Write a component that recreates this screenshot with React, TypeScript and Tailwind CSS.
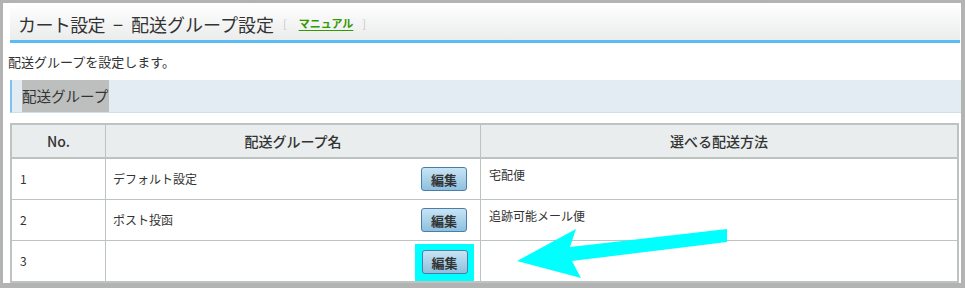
import React from "react";

const font = { fontFamily: '"Noto Sans CJK JP", "Noto Sans", sans-serif' };

function EditButton() {
  return (
    <button className="w-[46px] h-[24px] rounded-[3px] border border-[#4a7ea8] bg-gradient-to-b from-[#c8e4f5] to-[#8ec0de] text-[13px] font-bold text-[#333] leading-none flex items-center justify-center">
      編集
    </button>
  );
}

const rows = [
  { no: "1", name: "デフォルト設定", method: "宅配便" },
  { no: "2", name: "ポスト投函", method: "追跡可能メール便" },
  { no: "3", name: "", method: "", highlight: true },
];

export default function App() {
  return (
    <div className="relative w-[965px] h-[288px] bg-[#b3b3b3] pt-[3px] pl-[3px] pr-[4px] pb-[5px]" style={font}>
      <div className="w-full h-full bg-white overflow-hidden flex flex-col text-[#333]">
        {/* Title header */}
        <div className="ml-[7px] mr-[1px] h-[40px] shrink-0 border-b-[3px] border-[#5bbcf4] bg-gradient-to-b from-white to-[#ebecec] flex items-center pl-[8px] pt-[4px]">
          <h1 className="flex items-center text-[18px] leading-none text-[#333] font-normal">
            <span className="tracking-[-0.6px]">カート設定</span>
            <span className="ml-[8px] mr-[8px]">−</span>
            <span>配送グループ設定</span>
          </h1>
          <span className="ml-[9px] text-[11px] text-[#c8c8c8]">[</span>
          <span className="ml-[12px] text-[11px] font-bold text-[#339900] underline underline-offset-2">マニュアル</span>
          <span className="ml-[9px] text-[11px] text-[#c8c8c8]">]</span>
        </div>
        {/* Description */}
        <div className="h-[37px] shrink-0 flex items-center pl-[5px] text-[13px] leading-none">
          配送グループを設定します。
        </div>
        {/* Section bar */}
        <div className="ml-[7px] h-[33px] shrink-0 bg-[#e2ecf2] border-l-2 border-[#7cc4f0] border-b border-b-[#cfe0e2] flex">
          <div className="ml-[10px] h-full bg-[#bcbfbd] flex items-center text-[14.5px] leading-none pr-[1px]">
            配送グループ
          </div>
        </div>
        {/* Table */}
        <div className="ml-[7px] mt-[10px] w-[949px] border-2 border-[#bcc3c0] shrink-0">
          <div className="flex h-[34px] bg-[#e9eded] border-b-2 border-[#bcc3c0] text-[14px] font-medium">
            <div className="w-[94px] border-r border-[#bcc3c0] flex items-center justify-center">No.</div>
            <div className="w-[375px] border-r border-[#bcc3c0] flex items-center justify-center">配送グループ名</div>
            <div className="flex-1 flex items-center justify-center">選べる配送方法</div>
          </div>
          {rows.map((r) => (
            <div key={r.no} className="flex h-[41px] border-b border-[#bcc3c0] text-[12px]">
              <div className="w-[94px] border-r border-[#bcc3c0] flex items-center pl-[8px]">{r.no}</div>
              <div className="w-[375px] border-r border-[#bcc3c0] flex items-center justify-between pl-[7px] pr-[13px]">
                <span>{r.name}</span>
                {r.highlight ? (
                  <div className="-mr-[7px] w-[59px] h-[37px] bg-[#00ffff] flex items-center justify-center mt-[2px]">
                    <EditButton />
                  </div>
                ) : (
                  <EditButton />
                )}
              </div>
              <div className="flex-1 pl-[8px] pt-[7px]">{r.method}</div>
            </div>
          ))}
        </div>
      </div>
      {/* Arrow overlay */}
      <svg className="absolute left-0 top-0 pointer-events-none" width="965" height="288" viewBox="0 0 965 288">
        <polygon
          points="727,229 727,242 572,261 581,278 517,261 576,229 570,247"
          fill="#00ffff"
        />
      </svg>
    </div>
  );
}
